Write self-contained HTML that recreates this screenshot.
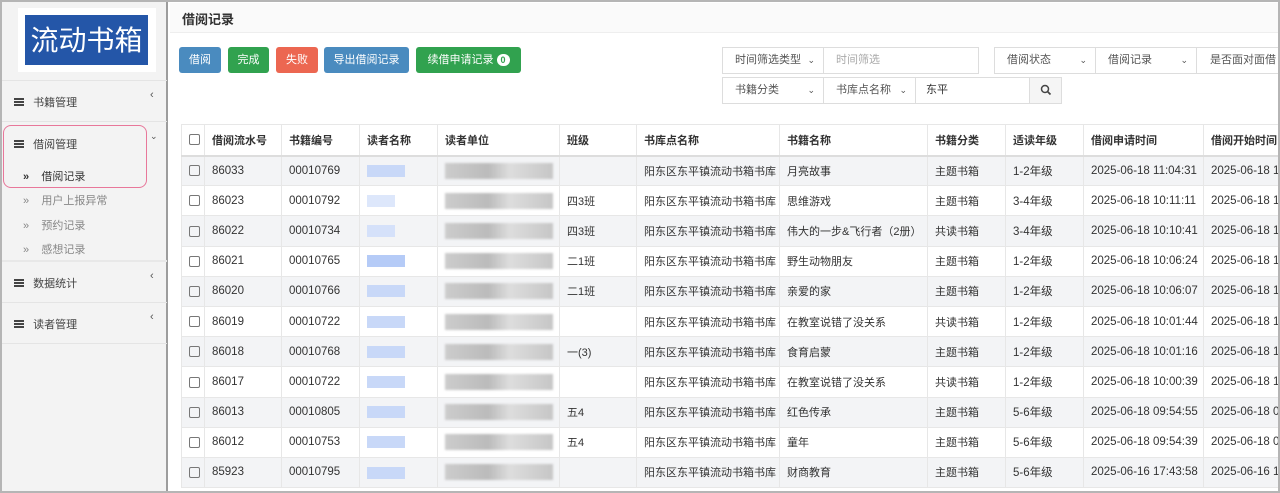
<!DOCTYPE html>
<html><head><meta charset="utf-8"><style>
*{box-sizing:border-box;margin:0;padding:0}
body{width:1280px;height:493px;overflow:hidden;background:#fff;font-family:"Liberation Sans","Noto Sans CJK SC",sans-serif;font-size:11px;color:#333;position:relative}
.a{position:absolute}
.frame{left:0;top:0;width:1280px;height:493px;border:2px solid #b5b5b5;pointer-events:none;z-index:10}
.side{left:2px;top:2px;width:166px;height:489px;background:#f3f3f3;border-right:2px solid #9d9d9d}
.logo{left:18px;top:8px;width:138px;height:64px;background:#fff}
.logo div{position:absolute;left:7px;top:7px;width:123px;height:50px;background:#2456a8;color:#fff;font-family:"Noto Sans CJK SC","WenQuanYi Zen Hei",sans-serif;font-size:28px;line-height:48px;text-align:center}
.sec{left:2px;width:165px;border-top:1px solid #e4e4e4}
.mi{font-size:11px;color:#444}
.ic{display:inline-block;width:10px;height:8px;background:linear-gradient(#444 0 2px,transparent 2px 3px,#444 3px 5px,transparent 5px 6px,#444 6px 8px)}
.btn{top:47px;height:26px;border-radius:3px;color:#fff;font-size:11px;line-height:26px;text-align:center}
.inp{border:1px solid #ddd;height:27px;font-size:11px;line-height:25px;padding-left:12px;color:#555;background:#fff}
.car{position:absolute;right:8px;top:0;font-size:9px;color:#555}
table{position:absolute;left:181px;top:124px;border-collapse:collapse;table-layout:fixed;width:1110px}
td,th{border:1px solid #e7e7e7;height:30.2px;padding:0 0 0 7px;text-align:left;white-space:nowrap;overflow:hidden;font-size:11px;font-weight:normal;vertical-align:middle}
th{font-weight:bold;height:31px;border-bottom:2px solid #ddd}
td.n{font-size:11.5px}
tr:nth-child(even) td{background:#f3f4f6}
.cb{display:inline-block;width:11px;height:11px;border:1px solid #777;border-radius:2px;vertical-align:middle}
.bl{display:inline-block;height:12px;background:#c8d8f8;vertical-align:middle}
.gr{display:inline-block;height:16px;background:linear-gradient(90deg,#ccc,#bbb 40%,#ddd 60%,#c6c6c6);vertical-align:middle;filter:blur(1px)}
</style></head><body>
<div class="a frame"></div>
<div class="a side"></div>
<div class="a logo"><div>流动书箱</div></div>
<div class="a sec" style="top:80px;height:41px"></div>
<div class="a mi" style="left:14px;top:94px"><span class="ic"></span>&nbsp;&nbsp;&nbsp;书籍管理</div>
<div class="a" style="left:150px;top:89px;color:#555">‹</div>
<div class="a sec" style="top:121px;height:1px"></div>
<div class="a" style="left:3px;top:125px;width:144px;height:63px;border:1.5px solid #e8779a;border-radius:8px"></div>
<div class="a mi" style="left:14px;top:136px"><span class="ic"></span>&nbsp;&nbsp;&nbsp;借阅管理</div>
<div class="a" style="left:150px;top:131px;color:#555;font-size:9px">⌄</div>
<div class="a mi" style="left:23px;top:168px;color:#333"><b>»</b>&nbsp;&nbsp;&nbsp;&nbsp;借阅记录</div>
<div class="a mi" style="left:23px;top:192px;color:#888">»&nbsp;&nbsp;&nbsp;&nbsp;用户上报异常</div>
<div class="a mi" style="left:23px;top:217px;color:#888">»&nbsp;&nbsp;&nbsp;&nbsp;预约记录</div>
<div class="a mi" style="left:23px;top:241px;color:#888">»&nbsp;&nbsp;&nbsp;&nbsp;感想记录</div>
<div class="a sec" style="top:260px;border-top:2px solid #e8e8e8"></div>
<div class="a mi" style="left:14px;top:275px"><span class="ic"></span>&nbsp;&nbsp;&nbsp;数据统计</div>
<div class="a" style="left:150px;top:270px;color:#555">‹</div>
<div class="a sec" style="top:302px"></div>
<div class="a mi" style="left:14px;top:316px"><span class="ic"></span>&nbsp;&nbsp;&nbsp;读者管理</div>
<div class="a" style="left:150px;top:311px;color:#555">‹</div>
<div class="a sec" style="top:343px"></div>

<div class="a" style="left:170px;top:3px;width:1108px;height:30px;background:#fafafa;border-bottom:1px solid #eee"></div>
<div class="a" style="left:182px;top:9px;font-size:13px;font-weight:bold;color:#333">借阅记录</div>

<div class="a btn" style="left:179px;width:42px;background:#4a8bbf">借阅</div>
<div class="a btn" style="left:228px;width:41px;background:#31a24f">完成</div>
<div class="a btn" style="left:276px;width:42px;background:#ec6751">失败</div>
<div class="a btn" style="left:324px;width:85px;background:#4a8bbf">导出借阅记录</div>
<div class="a btn" style="left:416px;width:105px;background:#31a24f">续借申请记录 <span style="display:inline-block;background:#fff;color:#31a24f;border-radius:8px;font-size:9px;font-weight:bold;line-height:12px;padding:0 4px">0</span></div>

<div class="a inp" style="left:722px;top:47px;width:102px">时间筛选类型<span class="car">⌄</span></div>
<div class="a inp" style="left:823px;top:47px;width:156px;color:#aaa">时间筛选</div>
<div class="a inp" style="left:994px;top:47px;width:102px">借阅状态<span class="car">⌄</span></div>
<div class="a inp" style="left:1095px;top:47px;width:102px">借阅记录<span class="car">⌄</span></div>
<div class="a inp" style="left:1196px;top:47px;width:84px;padding-left:13px">是否面对面借</div>
<div class="a inp" style="left:722px;top:77px;width:102px">书籍分类<span class="car">⌄</span></div>
<div class="a inp" style="left:823px;top:77px;width:93px">书库点名称<span class="car">⌄</span></div>
<div class="a inp" style="left:915px;top:77px;width:115px;padding-left:10px;color:#333">东平</div>
<div class="a inp" style="left:1029px;top:77px;width:33px;padding-left:0;text-align:center;background:#f5f5f5">
<svg width="12" height="12" viewBox="0 0 12 12" style="vertical-align:middle"><circle cx="5" cy="5" r="3.5" fill="none" stroke="#444" stroke-width="1.5"/><path d="M7.5 7.5L10.5 10.5" stroke="#444" stroke-width="1.7"/></svg></div>

<table>
<colgroup><col style="width:23px"><col style="width:77px"><col style="width:78px"><col style="width:78px"><col style="width:122px"><col style="width:77px"><col style="width:143px"><col style="width:148px"><col style="width:78px"><col style="width:78px"><col style="width:120px"><col style="width:88px"></colgroup>
<tr><th><span class="cb"></span></th><th>借阅流水号</th><th>书籍编号</th><th>读者名称</th><th>读者单位</th><th>班级</th><th>书库点名称</th><th>书籍名称</th><th>书籍分类</th><th>适读年级</th><th>借阅申请时间</th><th>借阅开始时间</th></tr>
<tr><td><span class="cb"></span></td><td class="n">86033</td><td class="n">00010769</td><td><span class="bl" style="width:38px"></span></td><td><span class="gr" style="width:108px"></span></td><td></td><td>阳东区东平镇流动书箱书库</td><td>月亮故事</td><td>主题书箱</td><td class="n">1-2年级</td><td class="n">2025-06-18 11:04:31</td><td class="n">2025-06-18 11:04:31</td></tr>
<tr><td><span class="cb"></span></td><td class="n">86023</td><td class="n">00010792</td><td><span class="bl" style="width:28px;background:#dde7fb"></span></td><td><span class="gr" style="width:108px"></span></td><td>四3班</td><td>阳东区东平镇流动书箱书库</td><td>思维游戏</td><td>主题书箱</td><td class="n">3-4年级</td><td class="n">2025-06-18 10:11:11</td><td class="n">2025-06-18 10:11:11</td></tr>
<tr><td><span class="cb"></span></td><td class="n">86022</td><td class="n">00010734</td><td><span class="bl" style="width:28px;background:#d5e1fa"></span></td><td><span class="gr" style="width:108px"></span></td><td>四3班</td><td>阳东区东平镇流动书箱书库</td><td>伟大的一步&amp;飞行者（2册）</td><td>共读书箱</td><td class="n">3-4年级</td><td class="n">2025-06-18 10:10:41</td><td class="n">2025-06-18 10:10:41</td></tr>
<tr><td><span class="cb"></span></td><td class="n">86021</td><td class="n">00010765</td><td><span class="bl" style="width:38px;background:#b5cbf7"></span></td><td><span class="gr" style="width:108px"></span></td><td>二1班</td><td>阳东区东平镇流动书箱书库</td><td>野生动物朋友</td><td>主题书箱</td><td class="n">1-2年级</td><td class="n">2025-06-18 10:06:24</td><td class="n">2025-06-18 10:06:24</td></tr>
<tr><td><span class="cb"></span></td><td class="n">86020</td><td class="n">00010766</td><td><span class="bl" style="width:38px"></span></td><td><span class="gr" style="width:108px"></span></td><td>二1班</td><td>阳东区东平镇流动书箱书库</td><td>亲爱的家</td><td>主题书箱</td><td class="n">1-2年级</td><td class="n">2025-06-18 10:06:07</td><td class="n">2025-06-18 10:06:07</td></tr>
<tr><td><span class="cb"></span></td><td class="n">86019</td><td class="n">00010722</td><td><span class="bl" style="width:38px"></span></td><td><span class="gr" style="width:108px"></span></td><td></td><td>阳东区东平镇流动书箱书库</td><td>在教室说错了没关系</td><td>共读书箱</td><td class="n">1-2年级</td><td class="n">2025-06-18 10:01:44</td><td class="n">2025-06-18 10:01:44</td></tr>
<tr><td><span class="cb"></span></td><td class="n">86018</td><td class="n">00010768</td><td><span class="bl" style="width:38px"></span></td><td><span class="gr" style="width:108px"></span></td><td>一(3)</td><td>阳东区东平镇流动书箱书库</td><td>食育启蒙</td><td>主题书箱</td><td class="n">1-2年级</td><td class="n">2025-06-18 10:01:16</td><td class="n">2025-06-18 10:01:16</td></tr>
<tr><td><span class="cb"></span></td><td class="n">86017</td><td class="n">00010722</td><td><span class="bl" style="width:38px"></span></td><td><span class="gr" style="width:108px"></span></td><td></td><td>阳东区东平镇流动书箱书库</td><td>在教室说错了没关系</td><td>共读书箱</td><td class="n">1-2年级</td><td class="n">2025-06-18 10:00:39</td><td class="n">2025-06-18 10:00:39</td></tr>
<tr><td><span class="cb"></span></td><td class="n">86013</td><td class="n">00010805</td><td><span class="bl" style="width:38px"></span></td><td><span class="gr" style="width:108px"></span></td><td>五4</td><td>阳东区东平镇流动书箱书库</td><td>红色传承</td><td>主题书箱</td><td class="n">5-6年级</td><td class="n">2025-06-18 09:54:55</td><td class="n">2025-06-18 09:54:55</td></tr>
<tr><td><span class="cb"></span></td><td class="n">86012</td><td class="n">00010753</td><td><span class="bl" style="width:38px"></span></td><td><span class="gr" style="width:108px"></span></td><td>五4</td><td>阳东区东平镇流动书箱书库</td><td>童年</td><td>主题书箱</td><td class="n">5-6年级</td><td class="n">2025-06-18 09:54:39</td><td class="n">2025-06-18 09:54:39</td></tr>
<tr><td><span class="cb"></span></td><td class="n">85923</td><td class="n">00010795</td><td><span class="bl" style="width:38px"></span></td><td><span class="gr" style="width:108px"></span></td><td></td><td>阳东区东平镇流动书箱书库</td><td>财商教育</td><td>主题书箱</td><td class="n">5-6年级</td><td class="n">2025-06-16 17:43:58</td><td class="n">2025-06-16 17:43:58</td></tr>
</table>
<div class="a" style="left:1278px;top:0;width:2px;height:493px;background:#b5b5b5;z-index:11"></div>
</body></html>
